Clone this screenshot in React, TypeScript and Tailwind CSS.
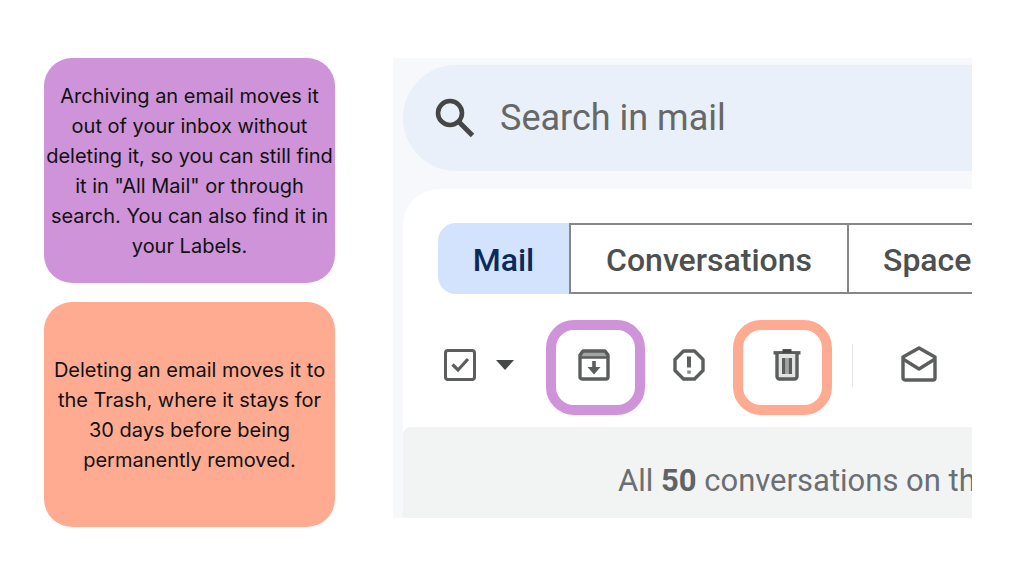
import React from 'react';

const notes = [{
  text: 'Archiving an email moves it out of your inbox without deleting it, so you can still find it in "All Mail" or through search. You can also find it in your Labels.',
  className: 'bg-[#ce93d8]'
}, {
  text: 'Deleting an email moves it to the Trash, where it stays for 30 days before being permanently removed.',
  className: 'bg-[#ffab91]'
}];

const SearchIcon = () => <svg viewBox="0 0 40 40" className="size-10 shrink-0" fill="none" stroke="#444746" aria-hidden="true">
    <circle cx="15" cy="15" r="12" strokeWidth="4.6" />
    <path d="M23.5 23.5L37.5 37.5" strokeWidth="5" />
  </svg>;

const ArchiveIcon = () => <svg viewBox="0 0 32 32" className="size-8" fill="none" stroke="#5b5e5d" aria-hidden="true">
    <path d="M2 8L5 2h22l3 6z" fill="#a3a5a4" stroke="none" />
    <path d="M2 6L5 2h22l3 4V28a2 2 0 0 1-2 2H4a2 2 0 0 1-2-2z" strokeWidth="3.4" strokeLinejoin="round" />
    <path d="M2 8.500h28" strokeWidth="2.500" />
    <path d="M16 12v8" strokeWidth="3.600" />
    <path d="M9.500 18h13L16 25.500z" fill="#5b5e5d" stroke="none" />
  </svg>;

const SpamIcon = () => <svg viewBox="0 0 32 32" className="size-8" fill="none" stroke="#5b5e5d" aria-hidden="true">
    <path d="M10.500 2h11L30 10.500v11L21.500 30h-11L2 21.500v-11z" strokeWidth="3.400" strokeLinejoin="round" />
    <path d="M16 7.500v11" strokeWidth="4" />
    <path d="M16 21.500v3.200" strokeWidth="3.600" stroke="#8a8c8b" />
  </svg>;

const TrashIcon = () => <svg viewBox="0 0 32 32" className="size-8" fill="none" stroke="#5b5e5d" aria-hidden="true">
    <path d="M2.500 3.800h27" strokeWidth="3.400" />
    <path d="M11.500 1.900h9" strokeWidth="3.600" stroke="#444746" />
    <path d="M6 5v22.500a2.500 2.500 0 0 0 2.500 2.500h15a2.500 2.500 0 0 0 2.500-2.500V5" fill="#e2e3e2" strokeWidth="3.400" />
    <path d="M12.800 9v16M19.200 9v16" strokeWidth="3.600" />
    <path d="M16 9v16" strokeWidth="2.800" stroke="#a3a5a4" />
  </svg>;

const MailOpenIcon = () => <svg viewBox="0 0 36 36" className="size-9" fill="none" stroke="#5b5e5d" strokeWidth="3.400" strokeLinejoin="round" aria-hidden="true">
    <path d="M2 11L18 2l16 9V32a2 2 0 0 1-2 2H4a2 2 0 0 1-2-2z" />
    <path d="M2 13l16 10 16-10" />
  </svg>;

const SelectAll = () => <label className="grid shrink-0 place-items-center pb-[5px]">
    <input type="checkbox" defaultChecked aria-label="Select all" className="col-start-1 row-start-1 size-8 appearance-none rounded border-3 border-[#5b5e5d] bg-white" />
    <svg viewBox="0 0 32 32" className="pointer-events-none col-start-1 row-start-1 size-8" fill="none" stroke="#5b5e5d" strokeWidth="3.200" aria-hidden="true">
      <path d="M8.500 15.500l5.500 5.500 10-11" />
    </svg>
  </label>;

const Toolbar = () => <div className="flex items-center pt-[26px] pb-3 pl-[41px]">
    <SelectAll />
    <button aria-label="Select options" className="ml-5 shrink-0 pb-[5px]">
      <svg viewBox="0 0 18 10" className="h-[10px] w-[18px]" aria-hidden="true">
        <path d="M0 0h18L9 10z" fill="#444746" />
      </svg>
    </button>
    <button aria-label="Archive" className="ml-8 flex h-[95px] w-[99px] shrink-0 items-center justify-center rounded-[28px] border-10 border-[#ce93d8] pr-1 pb-[5px]">
      <ArchiveIcon />
    </button>
    <button aria-label="Report spam" className="ml-7 shrink-0 pb-[5px]">
      <SpamIcon />
    </button>
    <button aria-label="Delete" className="ml-7 flex h-[95px] w-[99px] shrink-0 items-center justify-center rounded-[28px] border-10 border-[#ffab91] pl-2 pb-[5px]">
      <TrashIcon />
    </button>
    <div className="ml-5 flex h-12 shrink-0 pb-[5px]">
      <div className="w-px bg-[#e6e8e7]"></div>
    </div>
    <button aria-label="Mark as unread" className="ml-12 shrink-0 pb-2">
      <MailOpenIcon />
    </button>
  </div>;

const MailPanel = () => <section className="min-w-0 flex-1 overflow-hidden bg-[#f6f8fc] pt-[7px] pl-[10px] font-[Roboto,sans-serif] whitespace-nowrap">
    <label className="flex h-[106px] items-center gap-[25px] rounded-l-full bg-[#e9f0fa] pl-8">
      <SearchIcon />
      <input type="search" placeholder="Search in mail" className="min-w-0 flex-1 bg-transparent text-[36px] leading-10 outline-none placeholder:text-[#666867]" />
    </label>
    <div className="mt-[18px] rounded-tl-[36px] bg-white pt-[34px]">
      <div className="flex h-[71px] pl-[35px] text-[32px] leading-10 font-medium text-[#4d504f]">
        <button className="w-[131px] shrink-0 rounded-l-[18px] bg-[#d3e3fd] pt-0.5 text-[#0b2a5c]">Mail</button>
        <button className="w-[280px] shrink-0 border-2 border-[#868887] pt-0.5">Conversations</button>
        <button className="flex-1 border-y-2 border-[#868887] pt-0.5 pl-[34px] text-left">Space</button>
      </div>
      <Toolbar />
      <div className="h-[91px] rounded-tl-lg bg-[#f2f4f4] pt-[34px] pl-[215px] text-[31px] leading-10 text-[#6b6e73]">
        All <b className="font-bold text-[#5f6368]">50</b> conversations on th
      </div>
    </div>
  </section>;

const App: React.FC = () => {
  return <main className="flex min-h-screen gap-[58px] bg-white pt-[58px] pr-[52px] pb-12 pl-11">
      <div className="flex w-[291px] shrink-0 flex-col gap-[19px]">
        {notes.map(note => <p key={note.text} className={`flex h-[225px] items-center justify-center rounded-[28px] text-center font-[Inter,sans-serif] text-[20px] leading-[30px] text-[#111] ${note.className}`}>
            {note.text}
          </p>)}
      </div>
      <div className="flex min-w-0 flex-1 items-start">
        <MailPanel />
      </div>
    </main>;
};
export default App;
